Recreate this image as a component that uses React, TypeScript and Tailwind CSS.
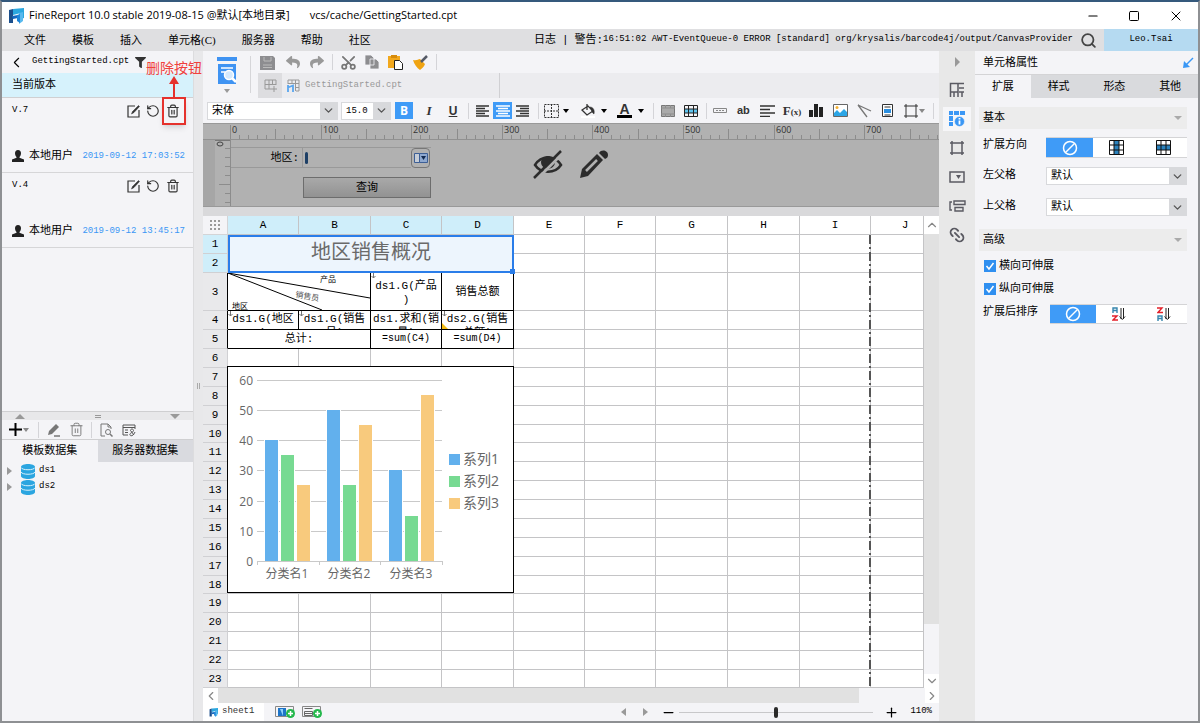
import React from 'react';
import { ChevronDown, ChevronLeft, ChevronRight, ChevronUp, Link2, Minus, Plus, RotateCcw, Scissors, Search, Square, Trash2, X } from 'lucide-react';
import { FaFilter, FaReply, FaShare } from 'react-icons/fa';
import clsx from 'clsx';

const MONO = "font-['Liberation_Mono','Noto_Sans_CJK_SC',monospace]";
const SANS = "font-['Open_Sans','Noto_Sans_CJK_SC',sans-serif]";

const menus = ['文件', '模板', '插入', '单元格(C)', '服务器', '帮助', '社区'];

const versions = [
  { name: 'V.7', user: '本地用户', time: '2019-09-12 17:03:52' },
  { name: 'V.4', user: '本地用户', time: '2019-09-12 13:45:17' },
];

const columns = ['A', 'B', 'C', 'D', 'E', 'F', 'G', 'H', 'I', 'J'];

type IconProps = {
  w?: number;
  h?: number;
  className?: string;
  children: React.ReactNode;
};

function Icon({ w = 16, h = 16, className, children }: IconProps) {
  return (
    <svg width={w} height={h} viewBox={`0 0 ${w} ${h}`} fill="none" stroke="currentColor" className={clsx('shrink-0', className)}>
      {children}
    </svg>
  );
}

function Logo({ size }: { size: number }) {
  return (
    <svg width={size} height={size} viewBox="0 0 16 16" className="shrink-0">
      <path d="M1 2l4-1v14H1z" fill="#1c4f8c" />
      <path d="M5 1l11-1v10l-3 1V5L5 7z" fill="#2ba7df" />
      <path d="M11 5l4-1v9l-4 3z" fill="#58b9ee" />
      <path d="M4 8l6-1v3l-5 1z" fill="#1568c0" />
      <path d="M9 7l3-1v9l-3-2z" fill="#1d84d8" />
    </svg>
  );
}

function Caret({ className = 'text-black' }: { className?: string }) {
  return (
    <Icon w={6} h={4} className={className}>
      <path d="M0 0h6L3 4z" fill="currentColor" stroke="none" />
    </Icon>
  );
}

function Sep({ className }: { className?: string }) {
  return <span className={clsx('w-px h-4 bg-[#d4d4d8] shrink-0', className)} />;
}

function EditIcon() {
  return (
    <Icon w={13} h={13}>
      <path d="M8 1H1v11h11V5" strokeWidth="1.200" />
      <path d="M4.500 9l1-2.500L11.500.5l1 1L7 7.500z" fill="currentColor" strokeWidth=".5" />
    </Icon>
  );
}

function UserIcon() {
  return (
    <Icon w={12} h={12} className="text-[#222]">
      <path d="M6 0c2 0 3 1.300 3 3.200S8 6.500 7.500 7v.8l4.500 1.800V12H0V9.600l4.500-1.800V7C4 6.500 3 5.100 3 3.200S4 0 6 0z" fill="currentColor" stroke="none" />
    </Icon>
  );
}

function DatabaseIcon() {
  return (
    <Icon w={14} h={15}>
      <path d="M0 3c0-4 14-4 14 0v9c0 4-14 4-14 0z" fill="#2ba5e0" stroke="none" />
      <path d="M0 3.500c1 3 13 3 14 0M0 8c1 3 13 3 14 0" stroke="#d9f1fb" />
    </Icon>
  );
}

function TitleBar() {
  return (
    <header className={clsx('flex items-center h-[27px] pl-[6px] bg-white text-[11px] text-black', SANS)}>
      <Logo size={16} />
      <span className="ml-[5px] whitespace-pre">FineReport 10.0 stable 2019-08-15 @默认[本地目录]</span>
      <span className="ml-5">vcs/cache/GettingStarted.cpt</span>
      <div className="flex items-center gap-7 ml-auto pr-[14px]">
        <button aria-label="最小化"><Minus size={14} strokeWidth={2} /></button>
        <button aria-label="最大化"><Square size={12} strokeWidth={2} /></button>
        <button aria-label="关闭"><X size={16} strokeWidth={1.500} /></button>
      </div>
    </header>
  );
}

function MenuBar() {
  return (
    <nav className={clsx('flex items-stretch h-[22px] bg-[#dfdfe1] text-[11px] text-black', MONO)}>
      <div className="flex items-center gap-[26px] pl-[22px] font-['Liberation_Serif','Noto_Sans_CJK_SC',serif]">
        {menus.map(menu => <button key={menu}>{menu}</button>)}
      </div>
      <div className="flex items-center ml-auto text-[9px] whitespace-pre">
        <span className="text-[11px]">日志</span>
        <span className="mx-[6px] text-[11px]">|</span>
        <span className="text-[11px]">警告:</span>
        16:51:02 AWT-EventQueue-0 ERROR [standard] org/krysalis/barcode4j/output/CanvasProvider
      </div>
      <button aria-label="搜索" className="px-[7px] text-[#444]"><Search size={17} strokeWidth={2.500} /></button>
      <button className="w-[94px] bg-[#b5daf1] text-[9px]">Leo.Tsai</button>
    </nav>
  );
}

function VersionItem({ version }: { version: typeof versions[number] }) {
  return (
    <li className="flex flex-col justify-between h-[75px] border-b border-[#d6d6d8] pt-[6px] pb-2 pl-[10px] pr-2">
      <div className="flex items-center">
        <span className="text-[9px]">{version.name}</span>
        <div className="flex items-center gap-[6px] ml-auto pr-[5px] text-[#333]">
          <button aria-label="编辑"><EditIcon /></button>
          <button aria-label="还原"><RotateCcw size={14} strokeWidth={2} /></button>
          <button aria-label="删除"><Trash2 size={14} strokeWidth={2} /></button>
        </div>
      </div>
      <div className="flex items-center whitespace-nowrap leading-4">
        <UserIcon />
        <span className="ml-[5px] text-[11px]">{version.user}</span>
        <time className="ml-auto text-[9px] text-[#3a97f5]">{version.time}</time>
      </div>
    </li>
  );
}

function LeftPanel() {
  return (
    <aside className={clsx('flex flex-col w-[192px] shrink-0 bg-[#f4f4f7] border-r border-[#dcdcde] text-black', MONO)}>
      <div className="flex items-center h-[22px] pl-[6px] text-[9px]">
        <button aria-label="返回"><ChevronLeft size={17} strokeWidth={1.500} /></button>
        <span className="ml-[7px]">GettingStarted.cpt</span>
        <FaFilter size={11} className="ml-[6px] text-[#333]" />
      </div>
      <div className="flex items-center h-[25px] pl-[10px] bg-[#d6f2fc] border-b border-[#d0d0d2] text-[11px]">当前版本</div>
      <ul>
        {versions.map(v => <VersionItem key={v.name} version={v} />)}
      </ul>
      <div className="h-[164px] border-b border-[#cfcfd1]" />
      <div className="flex items-center justify-between h-2 px-[13px] bg-[#e8e8ea] text-[#999]">
        <Icon w={10} h={5}><path d="M0 5h10L5 0z" fill="currentColor" stroke="none" /></Icon>
        <span className="w-[6px] h-[3px] border-y border-[#999]" />
        <Icon w={10} h={5}><path d="M0 0h10L5 5z" fill="currentColor" stroke="none" /></Icon>
      </div>
      <div className="flex items-center h-[19px] pl-[7px] text-[#777]">
        <button aria-label="添加" className="flex items-center gap-px text-black">
          <Icon w={13} h={13}><path d="M0 6.500h13M6.500 0v13" strokeWidth="2" /></Icon>
          <Caret className="text-[#888]" />
        </button>
        <Sep className="ml-[9px]" />
        <button aria-label="编辑数据集" className="ml-2">
          <Icon w={14} h={14}><path d="M1 12l1-4 7-7 3 3-7 7z" fill="#777" stroke="none" /><path d="M7 13h6" strokeWidth="1.500" /></Icon>
        </button>
        <button aria-label="删除数据集" className="ml-[8px]"><Trash2 size={15} strokeWidth={1.500} /></button>
        <Sep className="ml-[7px]" />
        <button aria-label="预览数据集" className="ml-2">
          <Icon w={13} h={14}><path d="M5 13H1V1h7l3 3v2M8 1v3h3" /><circle cx="8" cy="9" r="2.500" /><path d="M10 11l2.500 2.500" strokeWidth="1.500" /></Icon>
        </button>
        <button aria-label="数据集设置" className="ml-[9px] text-[#555]">
          <Icon w={14} h={14}><path d="M13 6V2H1v10h5M1 4.500h12M3 7h3M3 9.500h3" /><path d="M12 12L8.500 7.500c0-2 3-2 3 0S7 10 8 12s4 0 5-3" /></Icon>
        </button>
      </div>
      <div className="flex h-[23px] border-t border-[#cfcfd1] text-[11px]">
        <button className="w-1/2">模板数据集</button>
        <button className="w-1/2 bg-[#d9dadf]">服务器数据集</button>
      </div>
      <ul className="pt-px text-[9px]">
        {['ds1', 'ds2'].map(name => (
          <li key={name} className="flex items-center h-4 pl-[5px]">
            <Icon w={5} h={8}><path d="M0 0l5 4-5 4z" fill="#999" stroke="none" /></Icon>
            <span className="ml-[9px]"><DatabaseIcon /></span>
            <span className="ml-1">{name}</span>
          </li>
        ))}
      </ul>
    </aside>
  );
}

function FileToolbar() {
  return (
    <div className="flex h-[47px] bg-[#f4f4f7] text-[#999]">
      <button aria-label="预览" className="flex flex-col items-center gap-1 w-[47px] pt-[6px] shrink-0">
        <Icon w={22} h={28}>
          <path d="M1 0h20v4H1zM2 7h18v20H2z" fill="#3f93f2" stroke="none" />
          <path d="M5 11h12M5 15h4" stroke="#fff" strokeWidth="1.500" />
          <circle cx="13" cy="18" r="4.500" fill="#d5e9fd" stroke="#fff" strokeWidth="1.500" />
          <path d="M16 21l4 4" stroke="#fff" strokeWidth="2.500" />
        </Icon>
        <Caret className="text-[#999]" />
      </button>
      <span className="w-px my-[5px] bg-[#d6d6d9]" />
      <div className="flex-1 ml-[7px]">
        <div className="flex items-center h-[22px] pl-[2px]">
          <button aria-label="保存">
            <Icon w={15} h={15}><path d="M0 1h13l2 2v12H0z" fill="#8d8d90" stroke="none" /><path d="M4 2v4h7V2M3 10h9M3 12.500h9" stroke="#bbb" /></Icon>
          </button>
          <button aria-label="撤销" className="ml-[11px]"><FaReply size={14} /></button>
          <button aria-label="重做" className="ml-[10px]"><FaShare size={14} /></button>
          <Sep className="ml-2" />
          <button aria-label="剪切" className="ml-[7px] text-[#777]"><Scissors size={17} strokeWidth={2.500} className="-rotate-90" /></button>
          <button aria-label="复制" className="ml-[7px]">
            <Icon w={16} h={16}><path d="M1 1h6l3 3v7H1zM6 5h6l3 3v7H6z" fill="#8d8d90" stroke="#f4f4f7" strokeWidth=".8" /></Icon>
          </button>
          <button aria-label="粘贴" className="ml-2">
            <Icon w={16} h={16}><path d="M0 2h12v12H0z" fill="#f2a81d" stroke="none" /><path d="M3 1h6v3H3z" fill="#d68b0c" stroke="none" /><path d="M6.500 6.500h5l3 3v6h-8z" fill="#fff" stroke="#222" /></Icon>
          </button>
          <button aria-label="格式刷" className="ml-[9px]">
            <Icon w={15} h={15}><path d="M0 5c4 1 5-1 7-1l5 5c-1 3-3 4-5 6C4 13 1 9 0 5z" fill="#f0a412" stroke="none" /><path d="M8 7l6-6" stroke="#555a66" strokeWidth="2.500" /></Icon>
          </button>
          <Sep className="ml-2" />
        </div>
        <div className="flex items-center h-[25px] bg-[#ececef]">
          <button aria-label="新建模板" className="grid place-items-center w-6 h-[25px] bg-[#dddde0]">
            <Icon w={13} h={13}><path d="M1 1h11v5M1 1v9h6M1 5.500h11M5 1v9M8.500 1v5M10 7v6M7 10h6" /></Icon>
          </button>
          <div className={clsx('flex items-center self-stretch w-[218px] pl-[5px] border-r border-[#d0d0d3] text-[9px]', MONO)}>
            <Icon w={13} h={13}><path d="M1 1h11v11H9M1 1v4M1 4.500h11M5 1v4M8.500 1v11M9 8.500h3" /><path d="M1 6v7M1 8.500l5-2V13" stroke="#5aa6ee" strokeWidth="1.800" /></Icon>
            <span className="ml-[5px]">GettingStarted.cpt</span>
          </div>
        </div>
      </div>
    </div>
  );
}

function Dropdown({ label, value, className }: { label: string; value: string; className?: string }) {
  return (
    <div className={clsx('flex h-[18px] bg-white border border-[#d8d9dc] text-black', MONO, className)}>
      <select aria-label={label} defaultValue={value} className="flex-1 min-w-0 appearance-none pl-1 bg-white leading-4">
        <option>{value}</option>
      </select>
      <span className="grid place-items-center w-[17px] bg-[#d8d9dc] text-[#555] pointer-events-none"><ChevronDown size={13} strokeWidth={2.500} /></span>
    </div>
  );
}

function AlignIcon({ d }: { d: string }) {
  return <Icon w={14} h={12}><path d={d} strokeWidth="1.300" /></Icon>;
}

function FormatToolbar() {
  return (
    <div className="flex items-center h-[25px] pl-1 bg-[#f4f4f7] text-[#333]">
      <Dropdown label="字体" value="宋体" className="w-[131px] text-[11px]" />
      <Dropdown label="字号" value="15.0" className="w-[50px] ml-[3px] text-[9px]" />
      <button className={clsx('w-[18px] h-[17px] ml-1 bg-[#3f9bf7] text-white text-xs font-bold leading-4', SANS)}>B</button>
      <button className="w-4 ml-2 font-['Liberation_Serif',serif] text-[13px] font-bold italic">I</button>
      <button className="w-4 ml-2 font-['Liberation_Sans',sans-serif] text-xs font-bold underline">U</button>
      <Sep className="ml-[7px]" />
      <button aria-label="左对齐" className="ml-[7px]"><AlignIcon d="M0 1h13M0 3.500h9M0 6h13M0 8.500h9M0 11h13" /></button>
      <button aria-label="居中" className="grid place-items-center w-[19px] h-[17px] ml-[3px] bg-[#3f9bf7] text-white"><AlignIcon d="M0 1h14M2 3.500h10M0 6h14M2 8.500h10M0 11h14" /></button>
      <button aria-label="右对齐" className="ml-[3px]"><AlignIcon d="M1 1h13M5 3.500h9M1 6h13M5 8.500h9M1 11h13" /></button>
      <Sep className="ml-[9px]" />
      <button aria-label="边框" className="flex items-center gap-1 ml-[5px]">
        <Icon w={15} h={14}><path d="M.5.500h14v13H.5zM7.500 0v14M0 7h15" strokeDasharray="2 1" /></Icon>
        <Caret />
      </button>
      <button aria-label="背景" className="flex items-center gap-[6px] ml-3">
        <Icon w={14} h={15}><path d="M6 1v6M1 7l6-4 5 5-6 4z" strokeWidth="1.300" /><path d="M9 4c3 0 5 3 4 7-2-1-2-3-4-7z" fill="#333" strokeWidth=".5" /><path d="M0 13h14v2H0z" fill="#fff" stroke="none" /></Icon>
        <Caret />
      </button>
      <button aria-label="字体颜色" className="flex items-center gap-[6px] ml-[10px]">
        <span className="w-[15px] border-b-[3px] border-black font-['Liberation_Sans',sans-serif] text-[14px] leading-3 font-bold">A</span>
        <Caret />
      </button>
      <Sep className="ml-[9px]" />
      <button aria-label="合并单元格" className="ml-[7px]">
        <Icon w={14} h={12}><path d="M.5.500h13v11H.5z" fill="#aaa" stroke="#777" /><path d="M0 3h14M0 9h14M4.500 0v3M9.500 0v3M4.500 9v3M9.500 9v3" stroke="#8d8d8d" /></Icon>
      </button>
      <button aria-label="取消合并" className="ml-[9px]">
        <Icon w={14} h={12}><path d="M0 4h14v4H0z" fill="#5fc4ee" stroke="none" /><path d="M.5.500h13v11H.5zM0 4h14M0 8h14M4.500 0v12M9.500 0v12" stroke="#222" /></Icon>
      </button>
      <Sep className="ml-2" />
      <button aria-label="文本控件" className="ml-[6px] text-[#888]"><Icon w={14} h={5}><path d="M.5.500h13v4H.5zM3 2.500h2M6 2.500h2M9 2.500h2" /></Icon></button>
      <button className="ml-[10px] font-['Liberation_Sans',sans-serif] text-[11px] font-bold">ab</button>
      <button aria-label="富文本" className="ml-[10px]"><Icon w={15} h={12}><path d="M0 1h15M0 4.500h10M0 8h15M0 11.500h10" strokeWidth="1.500" /></Icon></button>
      <button className="ml-2 font-['Liberation_Serif',serif] text-[13px] font-bold">F<span className="text-[9px]">(x)</span></button>
      <button aria-label="图表" className="ml-2"><Icon w={14} h={13}><path d="M0 6h4v7H0zM5 0h4v13H5zM10 3h4v10h-4z" fill="#222" stroke="none" /></Icon></button>
      <button aria-label="图片" className="ml-[10px]">
        <Icon w={15} h={13}><path d="M.5.500h14v12H.5z" fill="#fff" stroke="#666" /><path d="M1 12V9l3-3 3 3 4-4 3 3v4z" fill="#2ba5e6" stroke="none" /><circle cx="4" cy="3.500" r="1.500" fill="#f5b030" stroke="none" /></Icon>
      </button>
      <button aria-label="斜线" className="ml-[9px]"><Icon w={15} h={14}><path d="M1 1l13 6M1 1l9 12" stroke="#777" strokeWidth="1.300" /></Icon></button>
      <button aria-label="子报表" className="ml-[10px]">
        <Icon w={11} h={13}><path d="M.5.500h10v12H.5z" fill="#fff" /><path d="M2.500 3h6M2.500 11h6" /><path d="M2 5h7v4H2z" fill="#2b8fe0" stroke="none" /></Icon>
      </button>
      <button aria-label="悬浮元素" className="flex items-center gap-px ml-[11px]">
        <Icon w={14} h={14}><path d="M2 0v14M12 0v14M0 2h14M0 12h14" /></Icon>
        <Caret className="text-[#888]" />
      </button>
      <Sep className="ml-2" />
    </div>
  );
}

// 100 units of the form take up 90.6px
const UNIT = 9.06;

function Ruler() {
  return (
    <svg height="16" className="block w-full bg-[#b1b1b1]">
      {Array.from({ length: 120 }, (_, i) => {
        const x = Math.round(27 + i * UNIT) + 0.5;
        const top = i % 10 === 0 ? 1 : i % 5 === 0 ? 5 : 11;
        return <path key={i} d={`M${x} ${top}V16`} stroke="#8c8c8c" />;
      })}
      {Array.from({ length: 8 }, (_, i) => (
        <text key={i} x={Math.round(29 + i * UNIT * 10)} y="9" fontSize="9" fill="#333" className="font-['Open_Sans',sans-serif]">{i * 100}</text>
      ))}
      <path d="M0 15.500h2000" stroke="#919191" />
    </svg>
  );
}

function ParameterPane() {
  return (
    <div className="border-t border-[#999] bg-[#b1b1b1]">
      <Ruler />
      <div className="flex h-[67px] border-b border-[#999]">
        <div className="w-3 bg-[#a6a6a6]" />
        <svg width="16" height="66" className="border-r border-[#8c8c8c]">
          {[9, 18, 27, 36, 45, 54, 63].map(y => <path key={y} d={`M${y === 45 ? 4 : 10} ${y - 0.5}H15`} stroke="#8c8c8c" />)}
          <path d="M0 .5h15" stroke="#777" />
          <ellipse cx="5" cy="4" rx="3" ry="2" fill="none" stroke="#444" />
        </svg>
        <form className={clsx('flex flex-col w-[200px] pt-[7px] text-black text-[11px]', MONO)}>
          <div className="flex h-[21px] border-t border-[#999]">
            <label htmlFor="area" className="w-[72px] pr-[3px] border-b border-r border-[#999] text-right leading-5">地区:</label>
            <div className="flex items-center w-[108px] border-b border-[#999]">
              <span className="w-[3px] h-3 ml-[2px] rounded-sm bg-[#1d3f66]" />
              <input id="area" className="flex-1 min-w-0 bg-transparent" />
            </div>
            <button type="button" aria-label="选择地区" className="grid place-items-center w-[19px] border border-[#777] rounded-sm">
              <Icon w={14} h={10}><path d="M.5.500h5v9h-5z" fill="#c5ccd6" stroke="#3d5f96" /><path d="M5.500.500h8v9h-8z" fill="#8ea8cf" stroke="#3d5f96" /><path d="M7 3h5l-2.500 4z" fill="#12294f" stroke="none" /></Icon>
            </button>
          </div>
          <button type="button" className="w-[128px] h-[21px] mt-[9px] ml-[72px] border border-[#6d6d6d] bg-linear-to-b from-[#a9a9a9] to-[#929292] leading-4">查询</button>
        </form>
        <div className="flex items-start gap-4 pt-[10px] ml-[102px] text-[#2c2c2c]">
          <button aria-label="隐藏参数面板">
            <Icon w={30} h={29}>
              <path d="M2 15c6-10 20-10 26 0-6 9-20 9-26 0z" strokeWidth="2.500" />
              <path d="M8 12c1-8 13-8 14 0 0 9-14 9-14 0z" fill="currentColor" stroke="none" />
              <path d="M3 30L31 2" stroke="#b1b1b1" strokeWidth="3" />
              <path d="M1 28L28 1" strokeWidth="2.500" />
            </Icon>
          </button>
          <button aria-label="编辑参数面板">
            <Icon w={30} h={29}>
              <path d="M1 28l2-9L18 4l6 6L9 26z" fill="currentColor" stroke="none" />
              <path d="M7 21L18 10" stroke="#b1b1b1" strokeWidth="2.500" />
              <path d="M20 3c2-4 9-3 9 2 0 2-1 3-3 4z" fill="currentColor" stroke="none" />
            </Icon>
          </button>
        </div>
      </div>
    </div>
  );
}

const rowHeights: Record<number, string> = { 3: 'h-[38px]', 10: 'h-[18px]', 18: 'h-[18px]', 23: 'h-[18px]' };

const GRID_CELL = 'border-r border-b border-[#c4c4c6] p-0';
const DATA_CELL = 'border-r border-b border-black p-0 text-center';

function ExpandMark() {
  return (
    <svg width="6" height="6" className="absolute left-0 top-0">
      <path d="M2.500 0v5M.5 3l2 2 2-2" fill="none" stroke="#777" />
    </svg>
  );
}

type FieldCellProps = {
  lines: string[];
  expands?: boolean;
  flagged?: boolean;
};

function FieldCell({ lines, expands, flagged }: FieldCellProps) {
  return (
    <td className={clsx(DATA_CELL, 'align-top')}>
      <div className="relative h-[18px] overflow-hidden whitespace-nowrap leading-4">
        {lines.map(line => <div key={line} className="h-[14px]">{line}</div>)}
        {expands && <ExpandMark />}
        {flagged && <svg width="6" height="6" className="absolute left-0 bottom-0"><path d="M0 0l6 6H0z" fill="#f5bd12" /></svg>}
      </div>
    </td>
  );
}

function reportCells(row: number) {
  if (row === 1) {
    return (
      <td colSpan={4} rowSpan={2} className="relative p-0 border-2 border-[#2a7de9] bg-[#edf5fd] text-center text-xl leading-6 text-[#6a6a6a]">
        地区销售概况
        <span className="absolute -right-[3px] -bottom-[3px] size-[5px] bg-[#2a7de9]" />
      </td>
    );
  }
  if (row === 3) {
    return (
      <>
        <td colSpan={2} className={clsx(DATA_CELL, 'align-top')}>
          <svg width="142" height="37" viewBox="0 0 142 37" className="block text-[8px]">
            <path d="M0 0l142 25M0 0l94 37" stroke="#000" />
            <text x="92" y="9">产品</text>
            <text x="67" y="24" fill="#555" transform="rotate(10 67 24)">销售员</text>
            <text x="4" y="36">地区</text>
          </svg>
        </td>
        <td className={clsx(DATA_CELL, 'align-top')}>
          <div className="relative h-[37px] pt-[6px] overflow-hidden leading-[14px]">ds1.G(产品<br />)<ExpandMark /></div>
        </td>
        <td className={DATA_CELL}>销售总额</td>
      </>
    );
  }
  if (row === 4) {
    return (
      <>
        <FieldCell lines={['ds1.G(地区', ')']} expands />
        <FieldCell lines={['ds1.G(销售', '员)']} expands />
        <FieldCell lines={['ds1.求和(销', '量)']} />
        <FieldCell lines={['ds2.G(销售', '总额)']} expands flagged />
      </>
    );
  }
  if (row === 5) {
    return (
      <>
        <td colSpan={2} className={DATA_CELL}>总计:</td>
        <td className={clsx(DATA_CELL, 'text-[10px]')}>=sum(C4)</td>
        <td className={clsx(DATA_CELL, 'text-[10px]')}>=sum(D4)</td>
      </>
    );
  }
  return row === 2 ? null : columns.slice(0, 4).map(c => <td key={c} className={GRID_CELL} />);
}

const series = [
  { name: '系列1', color: '#62b0ed', values: [40, 50, 30] },
  { name: '系列2', color: '#77da92', values: [35, 25, 15] },
  { name: '系列3', color: '#f8ca7d', values: [25, 45, 55] },
];

function Chart() {
  return (
    <svg width="287" height="227" className="absolute left-6 top-[150px] border border-black bg-white font-['Open_Sans','Noto_Sans_CJK_SC',sans-serif]">
      {[0, 10, 20, 30, 40, 50, 60].map(v => {
        const y = Math.round(194 - v * 3.02) + 0.5;
        return (
          <g key={v}>
            <path d={`M29 ${y}H214`} stroke="#c9c9c9" />
            <text x="25" y={y + 4} textAnchor="end" fontSize="12" fill="#666">{v}</text>
          </g>
        );
      })}
      {series.map((s, i) => s.values.map((v, j) => {
        const h = Math.round(v * 3.02);
        return <rect key={`${s.name}-${j}`} x={37 + j * 62 + i * 16} y={194 - h} width="13" height={h} fill={s.color} stroke="#fff" strokeWidth="2" paintOrder="stroke" />;
      }))}
      <path d="M29 194.500h186M29.500 194v4M91.500 194v4M152.500 194v4M214.500 194v4" stroke="#c9c9c9" />
      {['分类名1', '分类名2', '分类名3'].map((label, i) => (
        <text key={label} x={59 + i * 62} y="211" textAnchor="middle" fontSize="12" fill="#666">{label}</text>
      ))}
      {series.map((s, i) => (
        <g key={s.name}>
          <rect x="221" y={87 + i * 22} width="11" height="11" fill={s.color} />
          <text x="235" y={97 + i * 22} fontSize="14" fill="#666">{s.name}</text>
        </g>
      ))}
    </svg>
  );
}

function Sheet() {
  return (
    <div className={clsx('flex border-t border-[#d9d9db] text-[11px] text-black', MONO)}>
      <div className="relative flex-1 min-w-0">
        <table className="w-full table-fixed border-separate border-spacing-0 bg-white leading-4">
          <colgroup>
            <col className="w-[25px]" />
            <col className="w-[71px]" />
            <col className="w-[72px]" />
            <col className="w-[71px]" />
            <col className="w-[72px]" />
            <col className="w-[71px]" />
            <col className="w-[71px]" />
            <col className="w-[72px]" />
            <col className="w-[72px]" />
            <col className="w-[71px]" />
            <col />
          </colgroup>
          <thead>
            <tr className="h-[19px]">
              <th className="p-0 border-r border-b border-[#d4d4d6] bg-[#f4f4f7]">
                <svg width="12" height="10" className="mx-auto">
                  {[1, 5, 9].map(y => [1, 5, 9].map(x => <rect key={`${x}${y}`} x={x} y={y - 1} width="2" height="2" fill="#999" />))}
                </svg>
              </th>
              {columns.map((c, i) => (
                <th key={c} className={clsx('p-0 border-r border-b border-[#c4c4c6] font-normal', i < 4 && 'bg-[#cfeefa]', i === 9 && 'pl-4')}>{c}</th>
              ))}
            </tr>
          </thead>
          <tbody>
            {Array.from({ length: 23 }, (_, i) => i + 1).map(row => (
              <tr key={row} className={rowHeights[row] ?? 'h-[19px]'}>
                <th className={clsx('p-0 border-r border-b font-normal border-b-[#d0d0d3]', row < 3 ? 'bg-[#cfeefa]' : 'bg-[#e9e9eb]', row >= 3 && row <= 5 ? 'border-r-black' : 'border-r-[#d0d0d3]')}>
                  <div className="h-4 leading-4">{row}</div>
                </th>
                {reportCells(row)}
                {columns.slice(4).map(c => <td key={c} className={GRID_CELL} />)}
              </tr>
            ))}
          </tbody>
        </table>
        <Chart />
        <svg width="2" height="452" className="absolute left-[666px] top-[19px]">
          <path d="M1 0v452" stroke="#555" strokeWidth="2" strokeDasharray="9 3 2 3" />
        </svg>
      </div>
      <div className="flex flex-col w-[15px] bg-[#f4f4f7] text-[#888]">
        <button aria-label="向上滚动" className="grid place-items-center h-[18px] bg-white"><ChevronUp size={14} strokeWidth={2} /></button>
        <div className="h-[390px] bg-[#e1e1e1]" />
        <button aria-label="向下滚动" className="grid place-items-center h-[14px] mt-auto bg-white"><ChevronDown size={14} strokeWidth={2} /></button>
      </div>
    </div>
  );
}

function SheetBar() {
  return (
    <div className={clsx('bg-[#f4f4f7] text-black', MONO)}>
      <div className="flex h-[15px] text-[#888]">
        <button aria-label="向左滚动" className="grid place-items-center w-[15px] bg-white"><ChevronLeft size={14} strokeWidth={2} /></button>
        <div className="flex-1 mr-[66px] bg-[#e1e1e1]" />
        <button aria-label="向右滚动" className="grid place-items-center w-[14px] bg-white"><ChevronRight size={14} strokeWidth={2} /></button>
      </div>
      <div className="flex items-center h-[18px] text-[9px]">
        <button className="flex items-center gap-1 w-[61px] h-[18px] pl-[6px] bg-white text-[#333]"><Logo size={9} />sheet1</button>
        <button aria-label="新增报表" className="ml-[11px]">
          <Icon w={20} h={12}><path d="M.5.500h18v10H.5z" stroke="#888" /><path d="M3 2h8v8H3z" fill="#1d74c8" stroke="none" /><path d="M5 3l3 7V3z" fill="#8fd0fa" stroke="none" /><circle cx="15.500" cy="7.500" r="4.500" fill="#24b84c" stroke="none" /><path d="M13 7.500h5M15.500 5v5" stroke="#fff" strokeWidth="1.500" /></Icon>
        </button>
        <button aria-label="新增聚合报表" className="ml-[7px]">
          <Icon w={20} h={12}><path d="M.5.500h18v10H.5z" stroke="#888" /><path d="M2.500 2.500h8M2.500 5.500h8v4h-8zM3 7.500h7" stroke="#666" /><circle cx="15.500" cy="7.500" r="4.500" fill="#24b84c" stroke="none" /><path d="M13 7.500h5M15.500 5v5" stroke="#fff" strokeWidth="1.500" /></Icon>
        </button>
        <div className="flex items-center ml-auto pr-[7px]">
          <button aria-label="上一页" className="text-[#999]"><Icon w={5} h={8}><path d="M5 0v8L0 4z" fill="currentColor" stroke="none" /></Icon></button>
          <button aria-label="下一页" className="ml-[17px] text-[#999]"><Icon w={5} h={8}><path d="M0 0v8l5-4z" fill="currentColor" stroke="none" /></Icon></button>
          <button aria-label="缩小" className="ml-[13px]"><Minus size={15} strokeWidth={2} /></button>
          <input
            type="range"
            aria-label="缩放比例"
            defaultValue={50}
            className="w-[194px] h-3 ml-[3px] appearance-none bg-transparent [&::-webkit-slider-runnable-track]:h-px [&::-webkit-slider-runnable-track]:bg-[#c8c8ca] [&::-webkit-slider-thumb]:appearance-none [&::-webkit-slider-thumb]:w-1 [&::-webkit-slider-thumb]:h-[11px] [&::-webkit-slider-thumb]:-mt-[5px] [&::-webkit-slider-thumb]:rounded-sm [&::-webkit-slider-thumb]:bg-[#2b2b2b]"
          />
          <button aria-label="放大" className="ml-[11px]"><Plus size={15} strokeWidth={2} /></button>
          <span className="ml-[11px]">110%</span>
        </div>
      </div>
    </div>
  );
}

function ToolStrip() {
  return (
    <nav className="flex flex-col items-center w-9 shrink-0 pt-[6px] bg-[#e8e8e8] text-[#5a5a62]">
      <button aria-label="收起" className="text-[#999]"><Icon w={5} h={10}><path d="M0 0l5 5-5 5z" fill="currentColor" stroke="none" /></Icon></button>
      <div className="flex flex-col items-center gap-[5px] mt-[11px]">
        <button aria-label="单元格元素" className="grid place-items-center w-7 h-6">
          <Icon w={16} h={16}><path d="M15 1.500H1.500V15M9 1v14M1 10h8M10 6h5M10 10h5M5 10v5M13 10v5" strokeWidth="1.500" /></Icon>
        </button>
        <button aria-label="单元格属性" className="grid place-items-center w-7 h-6 bg-[#f6f6f8] text-[#3a97f5]">
          <Icon w={16} h={16}><path d="M0 0h4v4H0zM5 0h5v4H5zM11 0h5v4h-5zM0 5h4v5H0zM0 11h4v4H0z" fill="currentColor" stroke="none" /><circle cx="10.500" cy="10.500" r="5" fill="currentColor" stroke="#f6f6f8" strokeWidth=".6" /><path d="M10.500 7v1.500M10.500 9.500v4" stroke="#fff" strokeWidth="1.800" /></Icon>
        </button>
        <button aria-label="悬浮元素设置" className="grid place-items-center w-7 h-6">
          <Icon w={16} h={16}><path d="M3 1v14M13 1v14M1 3h14M1 13h14" strokeWidth="1.500" /></Icon>
        </button>
        <button aria-label="控件设置" className="grid place-items-center w-7 h-6">
          <Icon w={16} h={12}><path d="M1 1h14v10H1z" strokeWidth="1.500" /><path d="M7 4h5l-2.500 4z" fill="currentColor" stroke="none" /></Icon>
        </button>
        <button aria-label="条件属性" className="grid place-items-center w-7 h-6">
          <Icon w={17} h={12}><path d="M5 1h11v3.500H5zM6 7.500h8V11H6zM3 2H1v8h2" strokeWidth="1.400" /></Icon>
        </button>
        <button aria-label="超级链接" className="grid place-items-center w-7 h-6"><Link2 size={18} strokeWidth={2.500} className="rotate-45" /></button>
      </div>
    </nav>
  );
}

function SectionHeader({ children }: { children: React.ReactNode }) {
  return (
    <h2 className="flex items-center justify-between h-[22px] pl-1 pr-[5px] bg-[#ececec] text-[11px]">
      {children}
      <Icon w={8} h={4} className="text-[#aaa]"><path d="M0 0h8L4 4z" fill="currentColor" stroke="none" /></Icon>
    </h2>
  );
}

function NoneIcon() {
  return <Icon w={16} h={16} className="text-white"><circle cx="8" cy="8" r="6.500" strokeWidth="1.500" /><path d="M4 12l8-8" strokeWidth="1.500" /></Icon>;
}

function GridIcon({ d }: { d: string }) {
  return <Icon w={15} h={15}><path d={d} fill="#2b82bd" stroke="none" /><path d="M.5.500h14v14H.5zM5 0v15M10 0v15M0 5h15M0 10h15" stroke="#111" /></Icon>;
}

function SortIcon({ reverse }: { reverse?: boolean }) {
  return (
    <Icon w={14} h={14}>
      <path d={reverse ? 'M1 14V9h4v5M1 11.500h4' : 'M1 6V1h4v5M1 3.500h4'} stroke="#3585ad" strokeWidth="1.400" />
      <path d={reverse ? 'M0 1h5L1 5.500h5' : 'M0 9h5l-4 4h5'} stroke="#e3202a" strokeWidth="1.400" />
      <path d="M9 1v11M11.500 1v11M7.500 9.500l2.800 3 2.800-3" stroke="#222" />
    </Icon>
  );
}

function CheckRow({ label }: { label: string }) {
  return (
    <label className="flex items-center gap-[3px] h-[23px] pl-[5px]">
      <span className="relative size-3">
        <input type="checkbox" defaultChecked className="peer block size-3 appearance-none border border-[#2f8ff0] checked:bg-[#2f8ff0]" />
        <svg viewBox="0 0 12 12" className="absolute inset-0 hidden peer-checked:block pointer-events-none"><path d="M2.500 6l2.500 3 4.500-6" fill="none" stroke="#fff" strokeWidth="1.500" /></svg>
      </span>
      {label}
    </label>
  );
}

function PropertyPanel() {
  return (
    <aside className={clsx('w-[223px] shrink-0 bg-[#f4f4f7] text-[11px] leading-4 text-black', MONO)}>
      <div className="flex items-center justify-between h-6 pl-2 pr-1 border-b border-[#d4d4d6]">
        单元格属性
        <button aria-label="弹出" className="text-[#3a97f5]"><Icon w={11} h={11}><path d="M10 1L3 8" strokeWidth="1.500" /><path d="M0 11l1-7 6 6z" fill="currentColor" stroke="none" /></Icon></button>
      </div>
      <div className="flex h-[23px]">
        {['扩展', '样式', '形态', '其他'].map((tab, i) => (
          <button key={tab} className={clsx('flex-1', i > 0 && 'bg-[#d9dadd]')}>{tab}</button>
        ))}
      </div>
      <div className="pt-[9px] pl-1 pr-[11px]">
        <SectionHeader>基本</SectionHeader>
        <div className="flex h-[38px] pt-2 pl-1">
          <span className="w-[63px]">扩展方向</span>
          <div className="flex flex-1 h-[21px] bg-white border-y border-[#d4d4d6]">
            <button aria-label="不扩展" className="grid flex-1 place-items-center bg-[#3f9bf7]"><NoneIcon /></button>
            <button aria-label="纵向扩展" className="grid flex-1 place-items-center"><GridIcon d="M5 0h5v15H5z" /></button>
            <button aria-label="横向扩展" className="grid flex-1 place-items-center"><GridIcon d="M0 5h15v5H0z" /></button>
          </div>
        </div>
        <div className="flex h-[31px] pl-1">
          <span className="w-[63px]">左父格</span>
          <Dropdown label="左父格" value="默认" className="flex-1" />
        </div>
        <div className="flex h-[31px] pl-1">
          <span className="w-[63px]">上父格</span>
          <Dropdown label="上父格" value="默认" className="flex-1" />
        </div>
        <SectionHeader>高级</SectionHeader>
        <div className="pt-[3px]">
          <CheckRow label="横向可伸展" />
          <CheckRow label="纵向可伸展" />
        </div>
        <div className="flex pt-1 pl-1">
          <span className="w-[67px]">扩展后排序</span>
          <div className="flex flex-1 h-5 bg-white border-y border-[#d4d4d6]">
            <button aria-label="不排序" className="grid flex-1 place-items-center bg-[#3f9bf7]"><NoneIcon /></button>
            <button aria-label="升序" className="grid flex-1 place-items-center"><SortIcon /></button>
            <button aria-label="降序" className="grid flex-1 place-items-center"><SortIcon reverse /></button>
          </div>
        </div>
      </div>
    </aside>
  );
}

// Callout that points at the delete button of the first version
function DeleteCallout() {
  return (
    <div className="absolute left-[144px] top-[56px] flex flex-col items-center w-[56px] text-[#f0403c] pointer-events-none">
      <span className="font-['Noto_Sans_CJK_SC',sans-serif] text-[14px] leading-[18px] whitespace-nowrap">删除按钮</span>
      <Icon w={10} h={21}><path d="M5 5v16" stroke="#e5322d" strokeWidth="2" /><path d="M5 0l5 8H0z" fill="#e5322d" stroke="none" /></Icon>
      <span className="w-6 h-7 border-2 border-[#e5322d] shadow-md" />
    </div>
  );
}

export default function App() {
  return (
    <div className="relative flex flex-col min-h-screen border-2 border-[#8e9093] border-t-[#35597c] bg-[#f4f4f7] overflow-hidden">
      <TitleBar />
      <MenuBar />
      <div className="flex flex-1">
        <LeftPanel />
        <div className="grid place-items-center w-[9px] shrink-0 bg-[#e8e8ea]">
          <span className="w-[3px] h-[6px] border-x border-[#aaa]" />
        </div>
        <main className="flex flex-col flex-1 min-w-0">
          <FileToolbar />
          <FormatToolbar />
          <ParameterPane />
          <div className="h-2 bg-[#d9d9db]" />
          <Sheet />
          <SheetBar />
        </main>
        <ToolStrip />
        <PropertyPanel />
      </div>
      <DeleteCallout />
    </div>
  );
}
